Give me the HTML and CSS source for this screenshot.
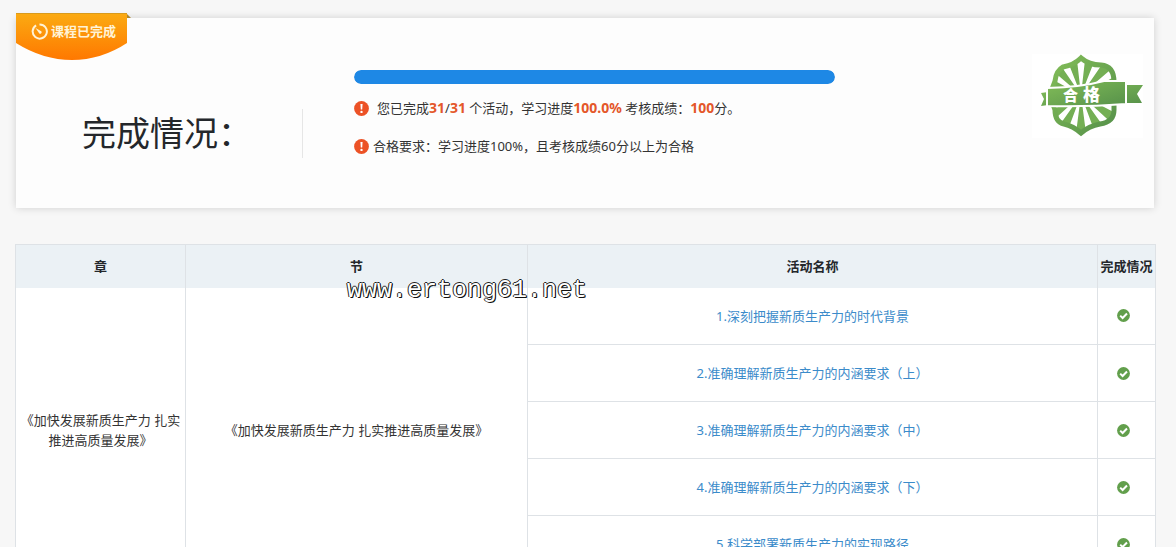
FILE: index.html
```html
<!DOCTYPE html>
<html lang="zh-CN">
<head>
<meta charset="utf-8">
<meta name="viewport" content="width=device-width, initial-scale=1">
<title>完成情况</title>
<link rel="stylesheet" href="styles.css">
</head>
<body>
<svg class="defs" aria-hidden="true">
  <symbol id="alert" viewBox="0 0 15 15"><circle cx="7.5" cy="7.5" r="7.4" fill="#ec5226"/><path d="M6.4 3h2.2l-.4 5.5H6.8z" fill="#fff"/><circle cx="7.5" cy="10.9" r="1.2" fill="#fff"/></symbol>
  <symbol id="check" viewBox="0 0 13 13"><circle cx="6.5" cy="6.5" r="6.4" fill="#629f4c"/><path d="M3.2 6.6l2.4 2.4 4.4-4.5" fill="none" stroke="#fff" stroke-width="2"/></symbol>
</svg>
<main class="page">
  <section class="summary">
    <div class="ribbon">
      <svg class="ribbon-shape" viewBox="0 0 115 47" aria-hidden="true">
        <defs><linearGradient id="orange" x1="0" y1="0" x2="0" y2="1"><stop offset="0" stop-color="#fbab12"/><stop offset="1" stop-color="#ff7800"/></linearGradient></defs>
        <path d="M110 0l5 5h-5z" fill="#a98632"/>
        <path d="M0 0h111v30Q85 47 56 47T0 30z" fill="url(#orange)"/>
        <path d="M0 .5h111" stroke="#d99a1c"/>
      </svg>
      <span class="ribbon-label">
        <svg class="gauge" viewBox="0 0 17 17" aria-hidden="true"><path d="M5.1 2.4A7.1 7.1 0 1 0 8.5 1.4q2 0 3.4 1" fill="none" stroke="#fff3d6" stroke-width="2"/><path d="M4.5 5l5.8 3.2a1.5 1.5 0 0 1-2 2.2z" fill="#fff3d6"/></svg>
        课程已完成
      </span>
    </div>
    <h1 class="title">完成情况：</h1>
    <div class="details">
      <div class="progress" role="progressbar" aria-valuenow="100" aria-label="学习进度"><div class="progress-fill" style="width:100%"></div></div>
      <p class="note spaced"><svg class="alert" aria-hidden="true"><use href="#alert"/></svg><span>您已完成<b>31</b>/<b>31</b> 个活动，学习进度<b>100.0%</b> 考核成绩：<b>100</b>分。</span></p>
      <p class="note"><svg class="alert" aria-hidden="true"><use href="#alert"/></svg><span>合格要求：学习进度100%，且考核成绩60分以上为合格</span></p>
    </div>
    <svg class="seal" viewBox="0 0 111 84" role="img" aria-label="合格">
      <defs>
        <linearGradient id="green" x1="0" y1="0" x2="1" y2="1"><stop offset="0" stop-color="#82bd58"/><stop offset="1" stop-color="#56914a"/></linearGradient>
        <clipPath id="disc"><path id="edge" d="M49 4Q57 11 69 11Q82 12 82 28V56Q82 68 68 70Q57 72 49 79Q41 72 32 70Q23 68 23 56Q16 41 23 27Q24 17 31 13Q42 11 49 4z"/></clipPath>
      </defs>
      <path d="M0 0h111v84H0z" fill="#fff"/>
      <g clip-path="url(#disc)">
        <path d="M49 41L54.700-9 67.300-5.500zM49 41L77.300-.2 87 8.500zM49 41L92.900 17.100 97.600 29.300zM49 41L43.300-9 30.700-5.500zM49 41L20.700-.2 11 8.500zM49 41L5.100 17.100.4 29.300zM49 41L93.400 64.100 85.900 74.800zM49 41L78 81.700 66.500 87.800zM49 41L55.500 90.600 42.500 90.600zM49 41L20 81.700 31.500 87.800zM49 41L4.600 64.100 12.100 74.800z" fill="#74af54"/>
      </g>
      <use href="#edge" fill="none" stroke="url(#green)" stroke-width="5"/>
      <path d="M9 39l7-1v13l-7 1 3-7zM95 31h16l-6 9 5 9H95z" fill="url(#green)"/>
      <path d="M15 34Q50 33 72 27H94V50Q55 53 15 52z" fill="url(#green)" stroke="#fff" stroke-width="2"/>
      <text x="31" y="47" class="seal-text small">合</text><text x="51" y="47" class="seal-text">格</text>
    </svg>
  </section>

  <div class="records">
    <table>
      <colgroup><col class="c-chapter"><col class="c-section"><col class="c-name"><col class="c-state"></colgroup>
      <thead><tr><th>章</th><th>节</th><th>活动名称</th><th>完成情况</th></tr></thead>
      <tbody>
        <tr><td rowspan="5">《加快发展新质生产力 扎实推进高质量发展》</td><td rowspan="5">《加快发展新质生产力 扎实推进高质量发展》</td><td><a href="#">1.深刻把握新质生产力的时代背景</a></td><td class="state"><svg class="check" role="img" aria-label="已完成"><use href="#check"/></svg></td></tr>
        <tr><td><a href="#">2.准确理解新质生产力的内涵要求（上）</a></td><td class="state"><svg class="check" role="img" aria-label="已完成"><use href="#check"/></svg></td></tr>
        <tr><td><a href="#">3.准确理解新质生产力的内涵要求（中）</a></td><td class="state"><svg class="check" role="img" aria-label="已完成"><use href="#check"/></svg></td></tr>
        <tr><td><a href="#">4.准确理解新质生产力的内涵要求（下）</a></td><td class="state"><svg class="check" role="img" aria-label="已完成"><use href="#check"/></svg></td></tr>
        <tr><td><a href="#">5.科学部署新质生产力的实现路径</a></td><td class="state"><svg class="check" role="img" aria-label="已完成"><use href="#check"/></svg></td></tr>
      </tbody>
    </table>
    <span class="watermark">www.ertong61.net</span>
  </div>
</main>
</body>
</html>
```
FILE: styles.css
```css
* { box-sizing: border-box; }
body {
  margin: 0;
  background: #f7f7f7;
  color: #333;
  font: 13px/20px "Noto Sans", "Noto Sans CJK SC", sans-serif;
}
.defs { display: none; }
.page { height: 100vh; overflow: hidden; padding: 18px 20px 0 15px; }
.summary {
  position: relative;
  display: flex;
  align-items: flex-start;
  margin: 0 2px 0 1px;
  padding: 36px 11px 50px 0;
  background: #fdfdfd;
  box-shadow: 0 0 8px rgba(0, 0, 0, .16);
}
.ribbon { position: absolute; left: 0; top: -5px; width: 115px; }
.ribbon-shape { display: block; width: 100%; }
.ribbon-label {
  position: absolute;
  left: 15px;
  top: 8px;
  display: flex;
  align-items: center;
  gap: 3px;
  color: #fff3d6;
  font-weight: bold;
  white-space: nowrap;
}
.gauge { width: 17px; height: 17px; }
.title {
  flex: none;
  margin: 55px 0 0;
  padding: 0 50px 0 66px;
  border-right: 1px solid #e6e6e6;
  color: #24272b;
  font-size: 34px;
  font-weight: normal;
  line-height: 49px;
  white-space: nowrap;
}
.details { flex: 1; margin: 16px 0 0 51px; }
.progress { width: 71%; height: 14px; border-radius: 7px; background: #e9ecef; overflow: hidden; }
.progress-fill { height: 100%; border-radius: 7px; background: #1e88e5; }
.note { display: flex; align-items: center; gap: 4px; margin: 14px 0 18px; }
.note + .note { margin: 0; }
.spaced { gap: 8px; }
.note b { color: #e4572a; font-size: 14px; }
.alert { width: 15px; height: 15px; }
.seal { flex: none; width: 111px; height: 84px; }
.seal-text { fill: #fff; font-size: 17px; font-weight: 900; }
.small { font-size: 15px; }
.records { position: relative; margin-top: 36px; }
table { width: 100%; table-layout: fixed; border-collapse: collapse; background: #fff; }
.c-chapter { width: 170px; }
.c-section { width: 30%; }
.c-name { width: auto; }
.c-state { width: 58px; }
th, td { padding: 0 4px; border: 1px solid #dee2e6; text-align: center; }
th { height: 43px; padding: 0; border-bottom: 0; background: #ebf1f5; color: #24272b; white-space: nowrap; }
td { height: 57px; }
tbody tr:first-child td { border-top: 0; }
a { color: #3b8bca; text-decoration: none; }
.state { padding-right: 10px; }
.check { display: block; width: 13px; height: 13px; margin: 0 auto; }
.watermark {
  position: absolute;
  left: 332px;
  top: 33px;
  color: #fff;
  font: 25px/28px "Liberation Mono", monospace;
  text-shadow: 1px 1px #111, -1px 0 #222, 0 -1px #222, 1px 0 #111;
}
```
